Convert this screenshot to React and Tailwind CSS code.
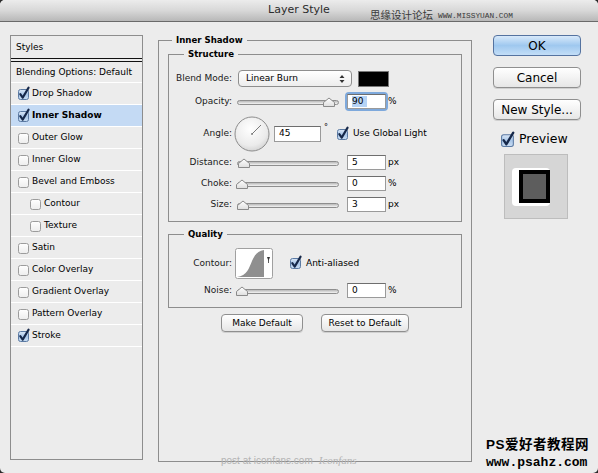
import React from "react";

function Check({ checked }) {
  return (
    <svg width="13" height="14" viewBox="0 0 13 14" className="shrink-0 overflow-visible">
      <rect
        x="0.5"
        y="2.5"
        width="10"
        height="10"
        rx="2"
        fill={checked ? "url(#cbOn)" : "url(#cbOff)"}
        stroke={checked ? "#5b7aa3" : "#9c9c9c"}
      />
      {checked && (
        <path
          d="M2.3 7.2 L4.7 10.6 L10.6 0.6"
          fill="none"
          stroke="#16284a"
          strokeWidth="2.1"
          strokeLinejoin="round"
          strokeLinecap="round"
        />
      )}
    </svg>
  );
}

function Thumb() {
  return (
    <svg width="12" height="10" viewBox="0 0 12 10">
      <path d="M0.5 9.5 L0.5 5.5 L6 1 L11.5 5.5 L11.5 9.5 Z" fill="url(#thumbG)" stroke="#8a8a8a" />
    </svg>
  );
}

function Slider({ pos }) {
  return (
    <div className="relative w-[102px] h-[12px] shrink-0">
      <div className="absolute left-0 right-0 top-[4px] h-[5px] rounded-full border border-[#8e8e8e] bg-gradient-to-b from-[#b9b9b9] to-[#f4f4f4]" />
      <div className="absolute top-[1px]" style={{ left: pos - 6 }}>
        <Thumb />
      </div>
    </div>
  );
}

function Field({ value, className = "", children }) {
  return (
    <div
      className={
        "h-[15px] bg-white border border-[#9a9a9a] border-t-[#6e6e6e] flex items-center pl-[4px] text-[9px] leading-none shrink-0 " +
        className
      }
    >
      {children ?? value}
    </div>
  );
}

function StyleRow({ label, checked, indent, selected, noCheck }) {
  return (
    <div
      className={
        "h-[22px] shrink-0 flex items-center border-b border-white " +
        (selected ? "bg-[#c4daf4] font-bold " : "") +
        (indent ? "pl-[19px]" : "pl-[7px]")
      }
    >
      {!noCheck && <Check checked={checked} />}
      <span className="ml-[1px] text-[9px] leading-none">{label}</span>
    </div>
  );
}

function Label({ children }) {
  return <div className="w-[63px] shrink-0 text-right text-[9px] leading-none text-[#1a1a1a]">{children}</div>;
}

function SliderRow({ label, pos, value, unit, className, focused }) {
  return (
    <div className={"flex items-center " + className}>
      <Label>{label}</Label>
      <div className="ml-[5px]">
        <Slider pos={pos} />
      </div>
      {focused ? (
        <div className="ml-[8px] rounded-[2px] shadow-[0_0_0_2px_#7ea9dc] shrink-0">
          <Field className="w-[39px] border-[#7a9cc6]">
            <span className="bg-[#b5d3f5] pr-[4px] h-[11px] flex items-center">{value}</span>
          </Field>
        </div>
      ) : (
        <Field value={value} className="ml-[8px] w-[39px]" />
      )}
      <span className="ml-[2px] text-[9px] leading-none">{unit}</span>
    </div>
  );
}

function MacButton({ children, className = "" }) {
  return (
    <div
      className={
        "flex items-center justify-center rounded-[4px] border border-[#8f8f8f] bg-gradient-to-b from-white via-[#f3f3f3] to-[#e6e6e6] shadow-[0_1px_0_#d0d0d0] " +
        className
      }
    >
      {children}
    </div>
  );
}

export default function App() {
  return (
    <div className="w-[598px] h-[473px] bg-[#2a2a2a]">
      <svg width="0" height="0" className="absolute">
        <defs>
          <linearGradient id="cbOn" x1="0" y1="0" x2="0" y2="1">
            <stop offset="0" stopColor="#dbe8f7" />
            <stop offset="0.5" stopColor="#a9c6e8" />
            <stop offset="1" stopColor="#c9ddf3" />
          </linearGradient>
          <linearGradient id="cbOff" x1="0" y1="0" x2="0" y2="1">
            <stop offset="0" stopColor="#ffffff" />
            <stop offset="1" stopColor="#ededed" />
          </linearGradient>
          <linearGradient id="thumbG" x1="0" y1="0" x2="0" y2="1">
            <stop offset="0" stopColor="#ffffff" />
            <stop offset="1" stopColor="#dedede" />
          </linearGradient>
          <radialGradient id="dialG" cx="0.45" cy="0.35" r="0.7">
            <stop offset="0" stopColor="#ffffff" />
            <stop offset="0.7" stopColor="#ebebeb" />
            <stop offset="1" stopColor="#cfcfcf" />
          </radialGradient>
        </defs>
      </svg>
      <div className="w-full h-full bg-[#ececec] rounded-[5px] overflow-hidden flex flex-col relative font-['DejaVu_Sans',sans-serif] text-black">
        {/* title bar */}
        <div className="h-[22px] shrink-0 flex items-center justify-center bg-gradient-to-b from-[#ececec] via-[#d8d8d8] to-[#b8b8b8] border-b border-[#6a6a6a] text-[11px] text-[#2c2c2c]">
          Layer Style
        </div>

        <div className="flex flex-1 min-h-0">
          {/* left styles list */}
          <div className="ml-[10px] mt-[13px] w-[133px] h-[425px] shrink-0 border border-[#8d8d8d] flex flex-col">
            <div className="h-[22px] shrink-0 flex items-center pl-[5px] text-[9px] leading-none">Styles</div>
            <div className="h-[4px] shrink-0 border-y border-[#111]" />
            <div className="h-[21px] shrink-0 flex items-center pl-[5px] text-[9px] leading-none border-b border-white">
              Blending Options: Default
            </div>
            <StyleRow label="Drop Shadow" checked />
            <StyleRow label="Inner Shadow" checked selected />
            <StyleRow label="Outer Glow" />
            <StyleRow label="Inner Glow" />
            <StyleRow label="Bevel and Emboss" />
            <StyleRow label="Contour" indent />
            <StyleRow label="Texture" indent />
            <StyleRow label="Satin" />
            <StyleRow label="Color Overlay" />
            <StyleRow label="Gradient Overlay" />
            <StyleRow label="Pattern Overlay" />
            <StyleRow label="Stroke" checked />
          </div>

          {/* main panel */}
          <fieldset className="ml-[15px] mt-[12px] w-[314px] h-[428px] shrink-0 border border-[#8d8d8d] min-w-0">
            <legend className="ml-[13px] px-[4px] font-bold text-[8.6px] leading-[12px]">Inner Shadow</legend>

            <fieldset className="ml-[9px] mt-[2px] w-[294px] border border-[#8d8d8d] pb-[9px] min-w-0">
              <legend className="ml-[15px] px-[4px] font-bold text-[8.6px] leading-[12px]">Structure</legend>

              <div className="mt-[10px] h-[17px] flex items-center">
                <Label>Blend Mode:</Label>
                <div className="ml-[6px] w-[114px] h-[17px] rounded-[4px] border border-[#8e8e8e] bg-gradient-to-b from-white to-[#ededed] flex items-center justify-between pl-[7px] pr-[6px] text-[9px] leading-none shrink-0">
                  <span>Linear Burn</span>
                  <svg width="6" height="10" viewBox="0 0 6 10">
                    <path d="M0.5 4 L3 1 L5.5 4 Z M0.5 6 L3 9 L5.5 6 Z" fill="#333" />
                  </svg>
                </div>
                <div className="ml-[6px] w-[31px] h-[16px] bg-black border border-[#777] shrink-0" />
              </div>

              <SliderRow className="mt-[7px] h-[15px]" label="Opacity:" pos={92} value="90" unit="%" focused />

              <div className="mt-[7px] h-[35px] flex items-center">
                <Label>Angle:</Label>
                <svg className="ml-[2px] shrink-0" width="36" height="36" viewBox="0 0 36 36">
                  <circle cx="18" cy="18" r="17" fill="url(#dialG)" stroke="#8c8c8c" />
                  <line x1="18" y1="18" x2="27" y2="9" stroke="#7a7a7a" strokeWidth="1" />
                  <circle cx="18" cy="18" r="0.9" fill="#777" />
                </svg>
                <Field value="45" className="ml-[4px] w-[47px] h-[16px]" />
                <span className="ml-[3px] self-start mt-[8px] text-[8px] leading-none">°</span>
                <div className="ml-[9px]">
                  <Check checked />
                </div>
                <span className="ml-[3px] text-[9px] leading-none">Use Global Light</span>
              </div>

              <SliderRow className="mt-[4px] h-[15px]" label="Distance:" pos={7} value="5" unit="px" />
              <SliderRow className="mt-[6px] h-[15px]" label="Choke:" pos={5} value="0" unit="%" />
              <SliderRow className="mt-[6px] h-[15px]" label="Size:" pos={6} value="3" unit="px" />
            </fieldset>

            <fieldset className="ml-[9px] mt-[6px] w-[294px] border border-[#8d8d8d] pb-[9px] min-w-0">
              <legend className="ml-[15px] px-[4px] font-bold text-[8.6px] leading-[12px]">Quality</legend>
              <div className="mt-[8px] h-[30px] flex items-center">
                <Label>Contour:</Label>
                <svg className="ml-[3px] shrink-0" width="38" height="31" viewBox="0 0 38 31">
                  <rect x="0.5" y="0.5" width="37" height="30" rx="2" fill="#fff" stroke="#a0a0a0" />
                  <path d="M2 29 C 12 28, 14 20, 17 13 C 20 6, 23 3, 29 2 L 29 29 Z" fill="#8f8f8f" />
                  <path d="M32 9 L35 9 L33.5 13 Z" fill="#333" />
                  <line x1="33.5" y1="12" x2="33.5" y2="15" stroke="#333" strokeWidth="0.8" />
                </svg>
                <div className="ml-[17px]">
                  <Check checked />
                </div>
                <span className="ml-[3px] text-[9px] leading-none">Anti-aliased</span>
              </div>
              <SliderRow className="mt-[5px] h-[15px]" label="Noise:" pos={5} value="0" unit="%" />
            </fieldset>

            <div className="mt-[6px] flex justify-center gap-[18px] text-[9px] leading-none">
              <MacButton className="w-[82px] h-[18px]">Make Default</MacButton>
              <MacButton className="w-[88px] h-[18px]">Reset to Default</MacButton>
            </div>
          </fieldset>

          {/* right column */}
          <div className="ml-[21px] mt-[13px] w-[88px] shrink-0 flex flex-col text-[12px] leading-none">
            <div className="h-[21px] rounded-[4px] border border-[#5573a0] bg-gradient-to-b from-[#d8e9fa] via-[#9fc8ef] to-[#c3def7] flex items-center justify-center">
              OK
            </div>
            <MacButton className="mt-[11px] h-[21px]">Cancel</MacButton>
            <MacButton className="mt-[11px] h-[21px]">New Style...</MacButton>
            <div className="mt-[12px] ml-[8px] flex items-center h-[14px]">
              <svg width="14" height="15" viewBox="0 0 13 14" className="overflow-visible">
                <rect x="0.5" y="2.5" width="11" height="11" rx="2" fill="url(#cbOn)" stroke="#5b7aa3" />
                <path d="M2.4 7.6 L5 11.4 L11.4 0.6" fill="none" stroke="#16284a" strokeWidth="2.2" strokeLinejoin="round" strokeLinecap="round" />
              </svg>
              <span className="ml-[4px] text-[12.5px]">Preview</span>
            </div>
            <div className="mt-[8px] ml-[11px] w-[64px] h-[65px] bg-[#d6d6d6] border border-[#bdbdbd] pl-[7px] pt-[13px]">
              <div className="w-[38px] h-[38px] bg-white rounded-[4px] pt-[2px] pl-[7px]">
                <div className="w-[31px] h-[33px] bg-black p-[4px]">
                  <div className="w-full h-full bg-[#5d5d5d]" />
                </div>
              </div>
            </div>
          </div>
        </div>

        {/* watermarks */}
        <div className="absolute left-[370px] top-[10px] flex items-end gap-[5px] text-[#3a3a3a]">
          <span className="font-['Noto_Sans_CJK_SC',sans-serif] text-[10.5px] leading-none">思缘设计论坛</span>
          <span className="font-['Liberation_Mono',monospace] text-[7.8px] leading-none">WWW.MISSYUAN.COM</span>
        </div>
        <div className="absolute left-[221px] top-[455px] flex items-end gap-[6px] text-[#b3b3b3]">
          <span className="font-['Liberation_Sans',sans-serif] text-[10px] leading-none">post at iconfans.com</span>
          <span className="font-['Liberation_Serif',serif] italic text-[11px] leading-none">Iconfans</span>
        </div>
        <div className="absolute left-[486px] top-[437px] flex flex-col text-black font-bold">
          <span className="font-['Liberation_Sans','Noto_Sans_CJK_SC',sans-serif] text-[13.5px] leading-[15px] tracking-[0.5px]">PS爱好者教程网</span>
          <span className="font-['Liberation_Mono',monospace] text-[13px] leading-[15px] mt-[3px]">www.psahz.com</span>
        </div>
      </div>
    </div>
  );
}
